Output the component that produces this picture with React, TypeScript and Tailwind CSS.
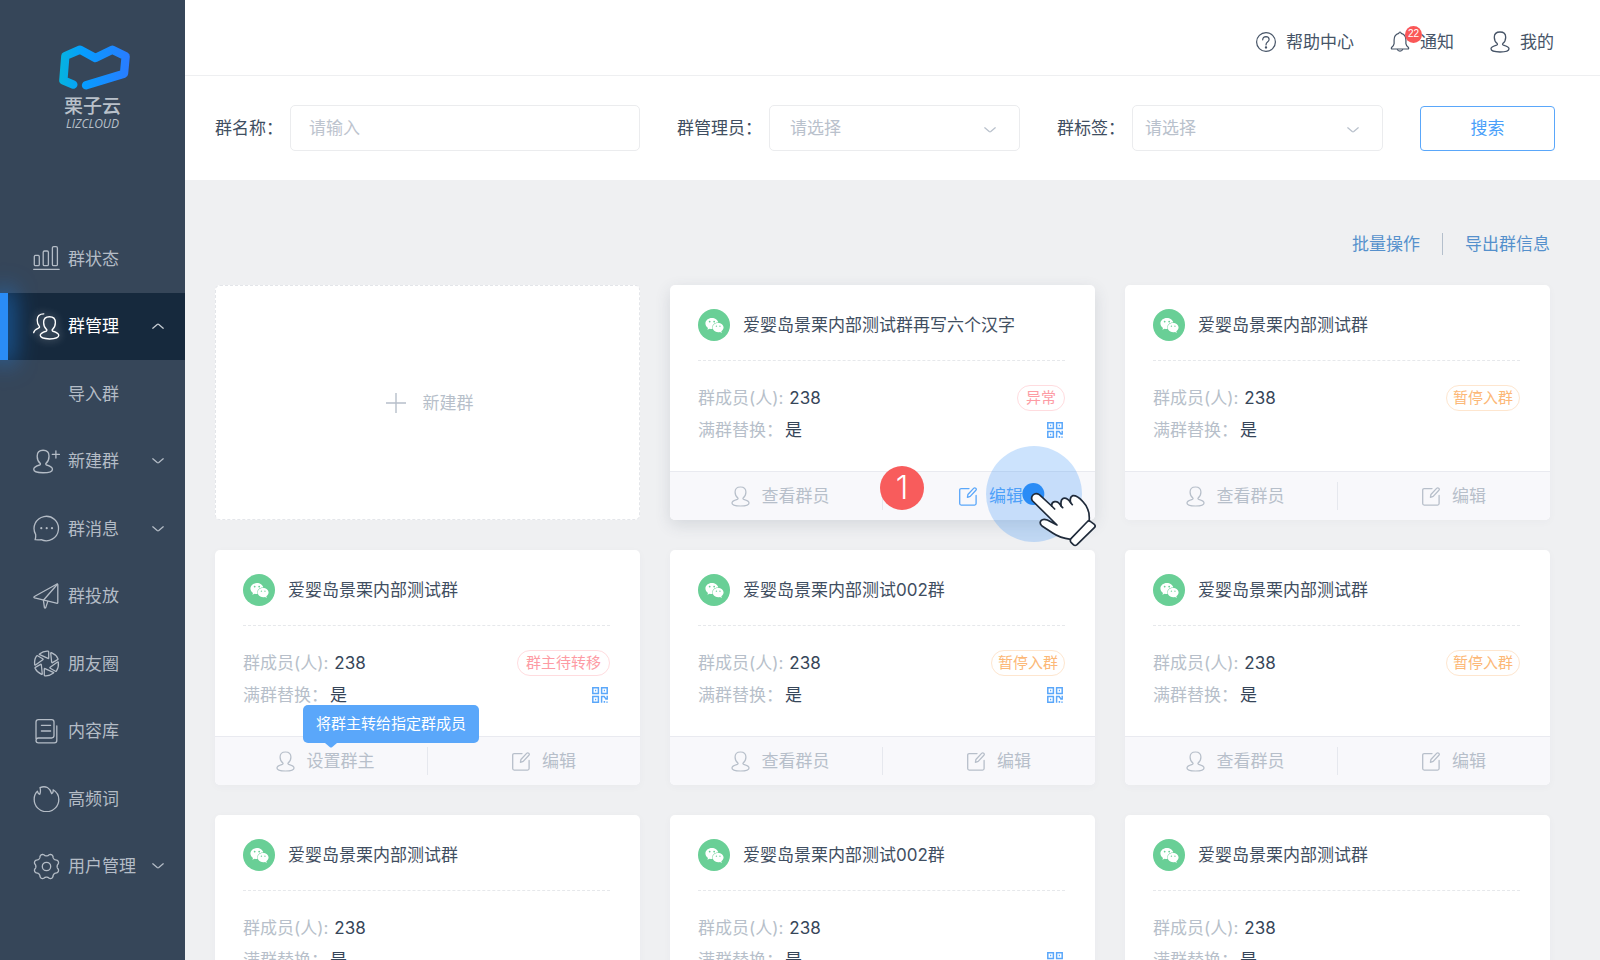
import React from 'react';
import { FaWeixin } from 'react-icons/fa';

type IconProps = { className?: string };

const PERSON =
  'M7.2 12.6C5 10.8 4.3 8.5 4.3 6.2C4.3 2.8 6.4 1 10 1C13.6 1 15.7 2.8 15.7 6.2C15.7 8.5 15 10.8 12.8 12.6C12.3 13.2 12.6 13.8 13.4 14.1C16.5 15 19 15.8 19 17.8C19 20 15 21 10 21C5 21 1 20 1 17.8C1 15.8 3.5 15 6.6 14.1C7.4 13.8 7.7 13.2 7.2 12.6Z';

function Person({ className }: IconProps) {
  return (
    <svg viewBox="0 0 20 22" fill="none" stroke="currentColor" strokeWidth="1.3" className={className} aria-hidden="true">
      <path d={PERSON} />
    </svg>
  );
}

function Chevron({ className }: IconProps) {
  return (
    <svg viewBox="0 0 12 6" fill="none" stroke="currentColor" strokeWidth="1.3" strokeLinecap="round" strokeLinejoin="round" className={className} aria-hidden="true">
      <path d="M.8 .8L5.2 4.5Q6 5.1 6.8 4.5L11.2 .8" />
    </svg>
  );
}

function Edit({ className }: IconProps) {
  return (
    <svg viewBox="0 0 18 19" fill="none" stroke="currentColor" strokeWidth="1.3" strokeLinecap="round" strokeLinejoin="round" className={className} aria-hidden="true">
      <path d="M10 1.6H2.2Q.7 1.6 .7 3.1V16.6Q.7 18.1 2.2 18.1H15.6Q17.1 18.1 17.1 16.6V8.4" />
      <path d="M14.6 1.4Q15.6 .4 16.7 1.2Q17.8 2.1 16.9 3.2L11.2 9.4L8.4 10.4L8.9 7.5Z" />
    </svg>
  );
}

function QrCode({ className }: IconProps) {
  return (
    <svg viewBox="0 0 16 16" fill="none" stroke="currentColor" strokeWidth="1.5" className={className} aria-hidden="true">
      <path d="M.8 .8h5.6v5.6H.8zM9.6 .8h5.6v5.6H9.6zM.8 9.6h5.6v5.6H.8z" />
      <path d="M9.6 15.8V9.6h2.6l2.2 3M15.2 8.8v4M12.4 14v1.8M15 14.4v1.4" />
      <path d="M3 3.6h1.2M11.8 3.6h1.2M3 12.4h1.2" />
    </svg>
  );
}

function gearPath() {
  const points: string[] = [];
  for (let i = 0; i < 144; i++) {
    const a = (i / 144) * Math.PI * 2;
    const wave = Math.cos(8 * a + Math.PI);
    const r = 11.7 + 1.1 * Math.sign(wave) * Math.pow(Math.abs(wave), 0.7);
    points.push(`${(13.5 + r * Math.cos(a)).toFixed(2)} ${(13.5 + r * Math.sin(a)).toFixed(2)}`);
  }
  return `M${points.join('L')}Z`;
}

const ICONS: Record<string, React.ReactNode> = {
  status: (
    <>
      <rect x="1.3" y="10.3" width="5" height="10.4" rx="1.3" />
      <rect x="10.2" y="6" width="5.2" height="14.7" rx="1.3" />
      <rect x="19.4" y="1.6" width="5" height="19.1" rx="1.3" />
      <path d="M.7 24.3H26.2" />
    </>
  ),
  manage: (
    <>
      <path d="M10.8 .8C6.4 .8 4.2 3.2 4.2 7C4.2 9.6 4.9 11.8 6.3 13.3C7 14.2 6 14.9 5 15.4C3 16.3 .9 17.4 .7 19.6" />
      <g transform="translate(6.2 2.6) scale(1.03 1.11)">
        <path d={PERSON} />
      </g>
    </>
  ),
  create: (
    <>
      <g transform="translate(-.3 1.2) scale(1.04 1.12)">
        <path d={PERSON} />
      </g>
      <path d="M19.3 6.4H26.4M22.9 2.8V10" />
    </>
  ),
  message: (
    <>
      <path d="M2.6 19.4A12.2 12.2 0 1 1 8.2 24.6Q5.6 25 2.1 24.7Q3 21.8 2.6 19.4Z" />
      <g fill="currentColor" stroke="none">
        <circle cx="8.3" cy="13.2" r="1.1" />
        <circle cx="13.7" cy="13.2" r="1.1" />
        <circle cx="19" cy="13.2" r="1.1" />
      </g>
    </>
  ),
  send: (
    <>
      <path d="M24 1Q24.8 .8 24.8 1.8V19.2Q24.8 20.6 23.4 20.2L1.6 14.9Q.2 14.3 1.4 13.5Z" />
      <path d="M24.4 1.2L10.4 17.2L11.4 24.4Q12 25.8 12.8 24.4L14.8 18.4" />
    </>
  ),
  aperture: (
    <g transform="translate(13.5 13.5)">
      {[0, 60, 120, 180, 240, 300].map((deg) => (
        <path key={deg} transform={`rotate(${deg})`} d="M-7 -9.6Q-3 -12.7 1.6 -12.3Q2.2 -12.2 2.2 -11.6V-5.6Q2.2 -4.8 1.5 -5.1L-6.8 -8.8Q-7.5 -9.2 -7 -9.6Z" />
      ))}
    </g>
  ),
  content: (
    <>
      <path d="M3 20.4V4Q3 1.6 5.4 1.6H18.6Q21 1.6 21 4V17.6Q21 20 18.6 20H5.4Q3 20 3 22.4Q3 24.8 5.4 24.8H21.4Q23.8 24.8 23.8 22.4V7.8" />
      <path d="M8.4 7.3H17.6M8.4 13H17.6" />
    </>
  ),
  hot: (
    <path d="M4.4 6.2Q4.9 9 6.8 9.4Q8 6 7 2.6Q11 .9 14.4 2.5Q17.6 4.4 18.6 8.7Q20.6 7.6 20.1 4.8Q25.8 8.3 25.8 14.4A12.3 12.3 0 0 1 1.2 14.4Q1.1 9.2 4.4 6.2Z" />
  ),
  settings: (
    <>
      <path d={gearPath()} />
      <circle cx="13.5" cy="13.5" r="4.2" />
    </>
  ),
};

function NavIcon({ name, active }: { name: string; active?: boolean }) {
  return (
    <svg
      viewBox="0 0 27 27"
      fill="none"
      stroke="currentColor"
      strokeWidth="1.3"
      strokeLinecap="round"
      strokeLinejoin="round"
      className={active ? 'size-[27px] drop-shadow-[0_0_4px_rgba(255,255,255,0.6)]' : 'size-[27px]'}
      aria-hidden="true"
    >
      {ICONS[name]}
    </svg>
  );
}

type NavEntry = { label: string; icon?: string; arrow?: boolean; active?: boolean };

const NAV: NavEntry[] = [
  { label: '群状态', icon: 'status' },
  { label: '群管理', icon: 'manage', arrow: true, active: true },
  { label: '导入群' },
  { label: '新建群', icon: 'create', arrow: true },
  { label: '群消息', icon: 'message', arrow: true },
  { label: '群投放', icon: 'send' },
  { label: '朋友圈', icon: 'aperture' },
  { label: '内容库', icon: 'content' },
  { label: '高频词', icon: 'hot' },
  { label: '用户管理', icon: 'settings', arrow: true },
];

function Sidebar() {
  return (
    <aside className="flex w-[185px] shrink-0 flex-col overflow-hidden bg-[#364659]">
      <div className="flex h-[225px] shrink-0 flex-col items-center pt-11 text-[#b9c1ca]">
        <svg viewBox="170 130 225 141" fill="none" className="ml-[3px] h-[47px] w-[75px]" aria-hidden="true">
          <defs>
            <linearGradient id="brand" x1="175" y1="0" x2="390" y2="0" gradientUnits="userSpaceOnUse">
              <stop offset="0" stopColor="#06b4dc" />
              <stop offset=".35" stopColor="#069dff" />
              <stop offset="1" stopColor="#2a7bff" />
            </linearGradient>
          </defs>
          <path d="M219 252L189 239L195 166L239 147L285 172L336 147L376 167L371 219L257 254" stroke="url(#brand)" strokeWidth="25" strokeLinecap="round" strokeLinejoin="round" />
        </svg>
        <div className="mt-[6px] text-[19px] leading-[20px] font-medium">栗子云</div>
        <div className="font-['Open_Sans'] text-[12px] leading-[14px] italic">LIZCLOUD</div>
      </div>
      <nav className="flex h-[675px] shrink-0 flex-col">
        {NAV.map((item) => (
          <a
            key={item.label}
            href="#"
            className={
              item.active
                ? 'relative z-10 flex flex-1 items-center bg-[#16293d] pr-[21px] pl-[33px] text-white'
                : 'flex flex-1 items-center pr-[21px] pl-[33px] text-[#b4bcc6]'
            }
          >
            {item.active && <span className="absolute inset-y-0 left-0 w-2 bg-[#2a8cf6] shadow-[0_0_24px_3px_rgba(30,136,245,0.75)]" />}
            <span className="flex w-[27px] shrink-0">{item.icon && <NavIcon name={item.icon} active={item.active} />}</span>
            <span className="ml-2 flex-1">{item.label}</span>
            {item.arrow && <Chevron className={item.active ? 'h-[6px] w-3 rotate-180 text-[#c6ccd3]' : 'h-[6px] w-3'} />}
          </a>
        ))}
      </nav>
    </aside>
  );
}

function Header() {
  return (
    <header className="flex h-[76px] shrink-0 items-center justify-end gap-9 border-b border-[#eeeff1] bg-white pt-2 pr-[46px] text-[#465467]">
      <a href="#" className="flex items-center gap-[10px]">
        <svg viewBox="0 0 20 20" fill="none" stroke="currentColor" strokeWidth="1.2" strokeLinecap="round" className="size-5" aria-hidden="true">
          <circle cx="10" cy="10" r="9.4" />
          <path d="M6.7 7.8Q6.8 4.6 10 4.6Q13.1 4.7 13.1 7.5Q13.1 8.9 11.5 10.1Q10 11.2 10 13" />
          <circle cx="10" cy="15.4" r=".6" fill="currentColor" />
        </svg>
        帮助中心
      </a>
      <a href="#" className="relative flex items-center gap-[10px]">
        <svg viewBox="0 0 20 21" fill="none" stroke="currentColor" strokeWidth="1.2" strokeLinejoin="round" className="h-[21px] w-5" aria-hidden="true">
          <path d="M10 1Q10.9 1 11.2 2.4Q15.9 3.6 15.9 9V12.6Q16.2 14.6 18.2 16.2Q19.4 17.9 17.6 18H2.4Q.6 17.9 1.8 16.2Q3.8 14.6 4.1 12.6V9Q4.1 3.6 8.8 2.4Q9.1 1 10 1Z" />
          <path d="M7.2 18.2Q7.8 20.2 10 20.2Q12.2 20.2 12.8 18.2" />
        </svg>
        通知
        <span className="absolute -top-1 left-[15px] flex size-[17px] items-center justify-center rounded-full bg-[#fa5757] font-['Liberation_Sans'] text-[10px] leading-none text-white">22</span>
      </a>
      <a href="#" className="flex items-center gap-[10px]">
        <Person className="h-[22px] w-5" />
        我的
      </a>
    </header>
  );
}

function SelectField({ id, label, pad }: { id: string; label: string; pad: string }) {
  return (
    <div className="flex items-center gap-[7px]">
      <label htmlFor={id} className="whitespace-nowrap">{label}</label>
      <div className="relative">
        <select id={id} className={`h-[46px] w-[251px] appearance-none rounded-[5px] border border-[#ebecee] bg-white text-[#b9c1cc] outline-none ${pad}`}>
          <option>请选择</option>
        </select>
        <Chevron className="pointer-events-none absolute top-[22px] right-6 h-[6px] w-3 text-[#b9c1cc]" />
      </div>
    </div>
  );
}

function Filters() {
  return (
    <form className="flex h-[104px] shrink-0 items-center gap-[37px] bg-white pr-[45px] pl-[30px] text-[#3f4e61]">
      <div className="flex flex-1 items-center gap-[7px]">
        <label htmlFor="name" className="whitespace-nowrap">群名称：</label>
        <input id="name" placeholder="请输入" className="h-[46px] w-full min-w-0 flex-1 rounded-[5px] border border-[#ebecee] px-[18px] outline-none placeholder:text-[#bdc4ce]" />
      </div>
      <SelectField id="admin" label="群管理员：" pad="px-5" />
      <SelectField id="tag" label="群标签：" pad="px-3" />
      <button type="button" className="h-[45px] w-[135px] rounded-[4px] border border-[#5aa7fa] text-[#4a9ffa]">搜索</button>
    </form>
  );
}

type Tone = 'red' | 'orange';
type Group = {
  name: string;
  tag?: string;
  tone?: Tone;
  qr?: boolean;
  action?: string;
  tip?: string;
  hovered?: boolean;
};

const GROUPS: Group[] = [
  { name: '爱婴岛景栗内部测试群再写六个汉字', tag: '异常', tone: 'red', qr: true, hovered: true },
  { name: '爱婴岛景栗内部测试群', tag: '暂停入群', tone: 'orange' },
  { name: '爱婴岛景栗内部测试群', tag: '群主待转移', tone: 'red', qr: true, action: '设置群主', tip: '将群主转给指定群成员' },
  { name: '爱婴岛景栗内部测试002群', tag: '暂停入群', tone: 'orange', qr: true },
  { name: '爱婴岛景栗内部测试群', tag: '暂停入群', tone: 'orange' },
  { name: '爱婴岛景栗内部测试群' },
  { name: '爱婴岛景栗内部测试002群', qr: true },
  { name: '爱婴岛景栗内部测试群' },
];

function Pointer() {
  return (
    <svg viewBox="978 528 330 303" fill="none" className="pointer-events-none absolute top-[161px] left-[316px] z-10 h-[101px] w-[110px]" aria-hidden="true">
      <circle cx="1122" cy="672" r="144" fill="#2a8cf6" fillOpacity=".24" />
      <circle cx="1120" cy="672" r="33" fill="#2a8cf6" />
      <g fill="#fff" stroke="#1f2a3a" strokeWidth="5" strokeLinejoin="round" strokeLinecap="round">
        <path d="M1232 808Q1200 804 1178 789L1146 768Q1137 760 1143 752Q1149 745 1162 750L1191 765L1118 693Q1111 684 1119 675Q1127 667 1138 674L1175 708Q1174 697 1184 695Q1195 693 1204 709Q1200 690 1210 685Q1221 682 1232 698Q1228 681 1238 677Q1250 675 1268 694Q1292 718 1287 756Z" />
        <path d="M1175 708L1184 717M1204 709L1208 713M1232 698L1237 704" />
        <path d="M1233 806L1281 756Q1286 750 1292 755L1303 763Q1308 768 1303 773L1251 824Q1245 829 1240 824L1233 817Q1229 811 1233 806Z" />
      </g>
    </svg>
  );
}

function GroupCard({ group }: { group: Group }) {
  const { name, tag, tone, qr, action = '查看群员', tip, hovered } = group;
  return (
    <article className={hovered ? 'relative z-10 rounded-[5px] bg-white shadow-[0_5px_16px_rgba(54,70,89,0.14)]' : 'relative rounded-[5px] bg-white shadow-[0_2px_8px_rgba(54,70,89,0.03)]'}>
      <div className="pr-[30px] pb-[25px] pl-7">
        <div className="flex h-[76px] items-center gap-[13px] border-b border-dashed border-[#e6e8eb] pt-[5px]">
          <span className="flex size-8 shrink-0 items-center justify-center rounded-full bg-[#69cf96] text-white">
            <FaWeixin className="size-[19px]" />
          </span>
          <h2 className="text-[#3f4e61]">{name}</h2>
        </div>
        <div className="pt-[21px] text-[#b7bfca]">
          <div className="flex h-8 items-center gap-[6px]">
            群成员(人):
            <span className="text-[#364659]">238</span>
            {tag && (
              <span
                className={
                  tone === 'red'
                    ? 'ml-auto rounded-full border border-[#ffdcdf] px-2 text-[15px] leading-6 text-[#fd9ba4]'
                    : 'ml-auto rounded-full border border-[#fee6cf] px-[6px] text-[15px] leading-6 text-[#fcb877]'
                }
              >
                {tag}
              </span>
            )}
          </div>
          <div className="flex h-8 items-center gap-[2px]">
            满群替换：
            <span className="text-[#364659]">是</span>
            {qr && <QrCode className="mr-[2px] ml-auto size-4 text-[#5aa7fa]" />}
          </div>
        </div>
      </div>
      <div className="relative grid h-[49px] grid-cols-[1fr_1px_1fr] items-center rounded-b-[5px] border-t border-[#e9eaf0] bg-[#f8f8fb] text-[#b7bfca]">
        <button type="button" className="flex h-full items-center justify-center gap-3 pl-2">
          <Person className="h-[21px] w-[19px]" />
          {action}
        </button>
        <span className="h-7 bg-[#e6e8ee]" />
        <button type="button" className={hovered ? 'flex h-full items-center justify-center gap-3 pl-1 text-[#5aa7fa]' : 'flex h-full items-center justify-center gap-3 pl-5'}>
          <Edit className="h-[19px] w-[18px]" />
          编辑
        </button>
        {tip && (
          <div role="tooltip" className="absolute bottom-[42px] left-[88px] rounded-[5px] bg-[#5aa7fa] px-[13px] text-[15px] leading-[38px] whitespace-nowrap text-white">
            {tip}
            <svg viewBox="0 0 12 5" className="absolute top-full left-[22px] h-[5px] w-3" aria-hidden="true">
              <path d="M0 0H12L7 4.2Q6 5 5 4.2Z" fill="#5aa7fa" />
            </svg>
          </div>
        )}
      </div>
      {hovered && (
        <>
          <span className="absolute top-[181px] left-[210px] flex size-11 items-center justify-center rounded-full bg-[#f85c5c] text-[32px] leading-none font-light text-white">1</span>
          <Pointer />
        </>
      )}
    </article>
  );
}

export default function App() {
  return (
    <div className="flex h-screen overflow-hidden bg-[#eff0f2] font-[Inter,'Noto_Sans_CJK_SC',sans-serif] text-[17px] leading-6">
      <Sidebar />
      <div className="flex min-w-0 flex-1 flex-col">
        <Header />
        <Filters />
        <main className="min-h-0 flex-1 overflow-y-auto pt-[53px] pr-[50px] pb-[30px] pl-[30px] [scrollbar-width:none]">
          <div className="flex h-[22px] items-center justify-end gap-[22px] text-[#5590cc]">
            <button type="button">批量操作</button>
            <span className="h-[22px] w-px bg-[#b4bfcc]" />
            <button type="button">导出群信息</button>
          </div>
          <div className="mt-[30px] grid grid-cols-3 gap-[30px]">
            <button type="button" className="flex items-center justify-center gap-[17px] rounded-[5px] border border-dashed border-[#e4e6ea] bg-white pl-1 text-[#b7bfca]">
              <svg viewBox="0 0 20 20" stroke="currentColor" strokeWidth="1.4" className="size-5" aria-hidden="true">
                <path d="M0 10H20M10 0V20" />
              </svg>
              新建群
            </button>
            {GROUPS.map((group, i) => (
              <GroupCard key={i} group={group} />
            ))}
          </div>
        </main>
      </div>
    </div>
  );
}
